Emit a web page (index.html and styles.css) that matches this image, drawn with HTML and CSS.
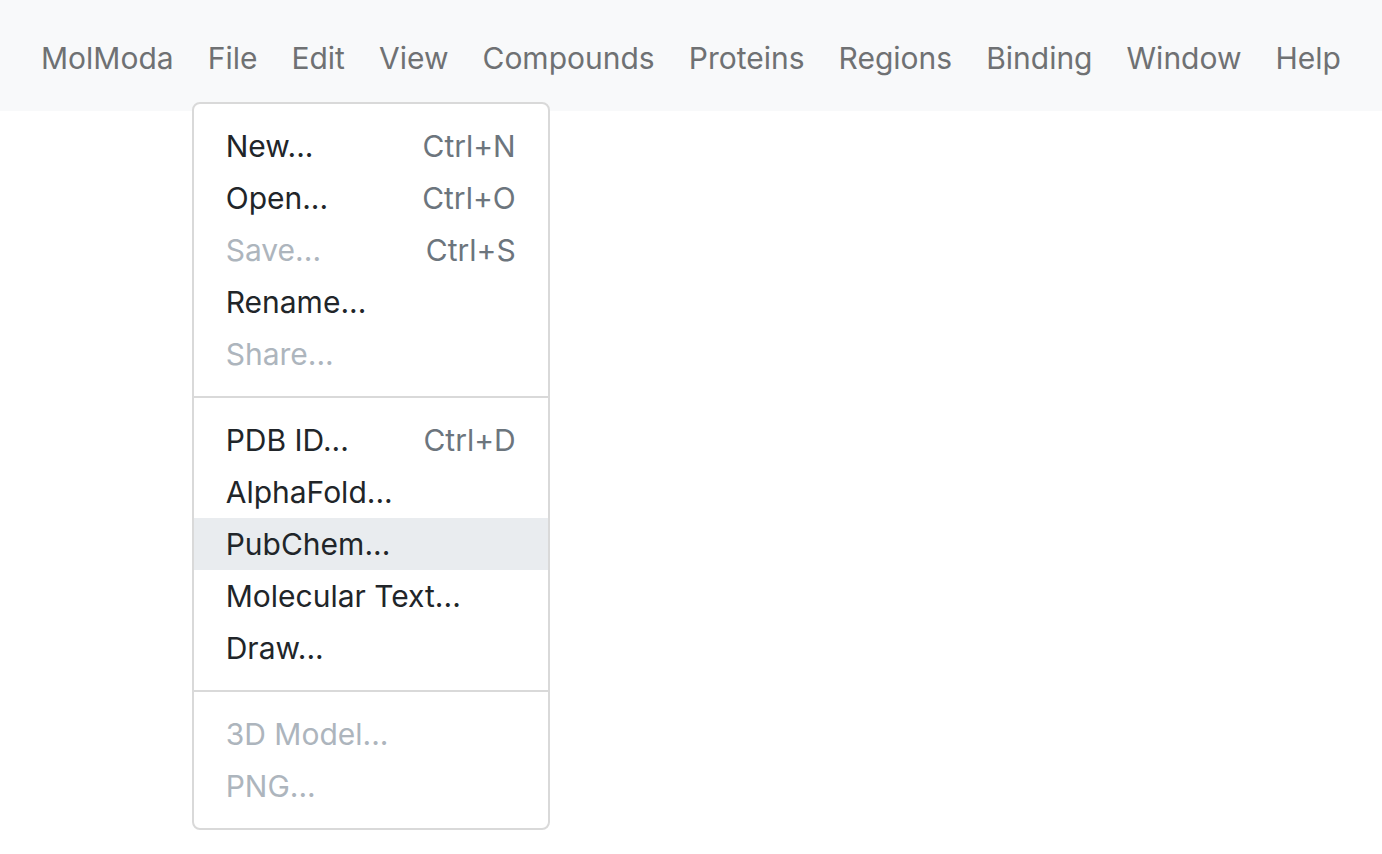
FILE: index.html
```html
<!DOCTYPE html>
<html lang="en">
  <head>
    <meta charset="UTF-8" />
    <meta name="viewport" content="width=device-width, initial-scale=1.0" />
    <title>MolModa</title>
    <link rel="stylesheet" href="styles.css">
  </head>
  <body>
    <nav class="navbar">
      <a href="#" class="brand">MolModa</a>
      <div class="nav-item dropdown">
        <a href="#" class="nav-link">File</a>
        <div class="dropdown-menu">
          <a href="#" class="dropdown-item"><span>New...</span><span class="shortcut">Ctrl+N</span></a>
          <a href="#" class="dropdown-item"><span>Open...</span><span class="shortcut">Ctrl+O</span></a>
          <a href="#" class="dropdown-item disabled"><span>Save...</span><span class="shortcut">Ctrl+S</span></a>
          <a href="#" class="dropdown-item"><span>Rename...</span></a>
          <a href="#" class="dropdown-item disabled"><span>Share...</span></a>
          <hr class="dropdown-divider">
          <a href="#" class="dropdown-item"><span>PDB ID...</span><span class="shortcut">Ctrl+D</span></a>
          <a href="#" class="dropdown-item"><span>AlphaFold...</span></a>
          <a href="#" class="dropdown-item active"><span>PubChem...</span></a>
          <a href="#" class="dropdown-item"><span>Molecular Text...</span></a>
          <a href="#" class="dropdown-item"><span>Draw...</span></a>
          <hr class="dropdown-divider">
          <a href="#" class="dropdown-item disabled"><span>3D Model...</span></a>
          <a href="#" class="dropdown-item disabled"><span>PNG...</span></a>
        </div>
      </div>
      <a href="#" class="nav-link">Edit</a>
      <a href="#" class="nav-link">View</a>
      <a href="#" class="nav-link">Compounds</a>
      <a href="#" class="nav-link">Proteins</a>
      <a href="#" class="nav-link">Regions</a>
      <a href="#" class="nav-link">Binding</a>
      <a href="#" class="nav-link">Window</a>
      <a href="#" class="nav-link">Help</a>
    </nav>
  </body>
</html>
```

FILE: styles.css
```css
/* Global */
html,
body {
  min-height: 100%;
}

body {
  margin: 0;
  padding: 0;
  min-height: 854px;
  background-color: #fff;
  font-family: Inter, "Liberation Sans", Arial, sans-serif;
  color: #212529;
}

a {
  text-decoration: none;
}

/* Navbar */
.navbar {
  display: flex;
  justify-content: space-between;
  align-items: center;
  height: 111px;
  padding: 0 25px;
  background-color: #f8f9fa;
  position: relative;
  z-index: 10;
}

.brand,
.nav-link {
  display: block;
  padding: 5px 16px 0;
  font-size: 30px;
  line-height: 52px;
  color: #6f7173;
}

.nav-item {
  position: relative;
}

/* File menu */
.dropdown-menu {
  position: absolute;
  top: 75px;
  left: 0;
  width: 354px;
  padding: 16px 0;
  background-color: #fff;
  border: 2px solid #d9d9d9;
  border-radius: 8px;
  z-index: 20;
}

.dropdown-item {
  display: flex;
  justify-content: space-between;
  padding: 0 32px;
  height: 52px;
  line-height: 52px;
  font-size: 30px;
  color: #212529;
  white-space: nowrap;
}

.dropdown-item.active {
  background-color: #e9ecef;
}

.dropdown-item.disabled {
  color: #adb5bd;
}

.shortcut {
  color: #6c757d;
}

.dropdown-divider {
  margin: 16px 0;
  height: 0;
  border: 0;
  border-top: 2px solid #d9d9d9;
}
```
